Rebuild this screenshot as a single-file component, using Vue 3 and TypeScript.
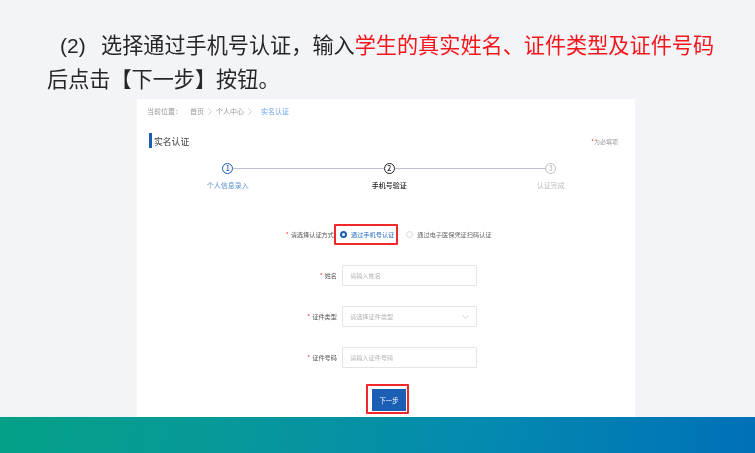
<script setup lang="ts">
interface Step { no: number; label: string; state: string }
const steps: Step[] = [
  { no: 1, label: '个人信息录入', state: 'done' },
  { no: 2, label: '手机号验证', state: 'active' },
  { no: 3, label: '认证完成', state: 'todo' },
]
</script>

<template>
  <div class="slide">
    <div class="instruction">
      <p class="line first"><span class="num">(2)</span>选择通过手机号认证，输入<span class="red">学生的真实姓名、证件类型及证件号码</span></p>
      <p class="line">后点击【下一步】按钮。</p>
    </div>
    <div class="card">
      <div class="crumbs">
        <span class="crumb-lead">当前位置：</span>
        <span>首页</span>
        <svg class="sep" width="4" height="7" viewBox="0 0 4 7"><path d="M.5.5 3.5 3.5.5 6.5" fill="none" stroke="#b5b5b5" stroke-width=".7"/></svg>
        <span>个人中心</span>
        <svg class="sep" width="4" height="7" viewBox="0 0 4 7"><path d="M.5.5 3.5 3.5.5 6.5" fill="none" stroke="#b5b5b5" stroke-width=".7"/></svg>
        <span class="here">实名认证</span>
      </div>
      <div class="title-row">
        <h1 class="title">实名认证</h1>
        <span class="required"><i>*</i>为必填项</span>
      </div>
      <div class="steps">
        <div v-for="s in steps" :key="s.no" class="step" :class="s.state">
          <span class="dot">{{ s.no }}</span>
          <span class="step-label">{{ s.label }}</span>
        </div>
      </div>
      <div class="form">
        <div class="row radio-row">
          <label class="label"><i>*</i>请选择认证方式</label>
          <div class="radios">
            <span class="radio on"><b class="circle"></b>通过手机号认证</span>
            <span class="radio"><b class="circle"></b>通过电子医保凭证扫码认证</span>
          </div>
        </div>
        <div class="row">
          <label class="label"><i>*</i>姓名</label>
          <div class="control">请输入姓名</div>
        </div>
        <div class="row">
          <label class="label"><i>*</i>证件类型</label>
          <div class="control">
            请选择证件类型
            <svg width="7" height="4" viewBox="0 0 7 4"><path d="M.5.5 3.5 3.3 6.5.5" fill="none" stroke="#b4b8bf" stroke-width=".7"/></svg>
          </div>
        </div>
        <div class="row">
          <label class="label"><i>*</i>证件号码</label>
          <div class="control">请输入证件号码</div>
        </div>
        <div class="actions">
          <div class="next-box"><button class="next" type="button">下一步</button></div>
        </div>
      </div>
    </div>
    <div class="band"></div>
  </div>
</template>

<style>
html, body { margin: 0; padding: 0; background: #f3f4f7; }
</style>

<style scoped>
.slide {
  width: 755px;
  height: 453px;
  overflow: hidden;
  background: #f3f4f7;
  display: flex;
  flex-direction: column;
  font-family: "Noto Sans CJK SC", "Liberation Sans", sans-serif;
}
.instruction {
  height: 99px;
  box-sizing: border-box;
  padding: 28px 0 0 47px;
  color: #262626;
  font-size: 21.15px;
  line-height: 32px;
  filter: blur(0.4px);
}
.line { margin: 0; white-space: nowrap; }
.line.first { margin-left: 13px; }
.num {
  display: inline-block;
  width: 41px;
  font-family: "Liberation Sans", sans-serif;
  font-size: 21px;
}
.red { color: #f5161c; }
.card {
  width: 498px;
  height: 318px;
  margin-left: 137px;
  box-sizing: border-box;
  background: #fff;
  padding: 0 17px 0 10px;
  color: #555;
  font-size: 6.2px;
  filter: blur(0.5px);
}
.crumbs {
  height: 24px;
  display: flex;
  align-items: center;
  color: #999;
  font-size: 7px;
}
.crumb-lead { width: 43px; }
.sep { margin: 0 4px; }
.here { margin-left: 5px; color: #6aa6ec; }
.title-row {
  height: 20px;
  margin-top: 8px;
  display: flex;
  align-items: center;
  justify-content: space-between;
  padding-left: 3px;
  position: relative;
}
.title-row::before {
  content: "";
  position: absolute;
  left: 2px;
  top: 2px;
  width: 3px;
  height: 15px;
  background: #1a5fb4;
}
.title {
  margin: 0 0 0 4px;
  font-size: 8.8px;
  font-weight: 400;
  color: #3c3c3c;
}
.required { color: #999; font-size: 6px; }
.required i { color: #f0383c; font-style: normal; }
.steps {
  display: grid;
  grid-template-columns: repeat(3, 161.5px);
  margin-top: 12px;
}
.step {
  position: relative;
  display: flex;
  flex-direction: column;
  align-items: center;
  gap: 6px;
  font-size: 7px;
}
.step:not(:last-child)::after {
  content: "";
  position: absolute;
  top: 5px;
  left: calc(50% + 5.5px);
  width: 151px;
  height: 1px;
  background: #bcc0cd;
}
.dot {
  width: 11px;
  height: 11px;
  box-sizing: border-box;
  border: 1px solid currentColor;
  border-radius: 50%;
  display: flex;
  align-items: center;
  justify-content: center;
  font-size: 7px;
  font-weight: 500;
  line-height: 1;
}
.step.done { color: #1a5fb4; }
.step.done .step-label { color: #5f93d2; }
.step.active { color: #222; }
.step.active .dot { border-width: 1.3px; }
.step.active .step-label { font-weight: 500; }
.step.todo { color: #bdbdbd; }
.form {
  margin-top: 34px;
  display: flex;
  flex-direction: column;
  gap: 20px;
}
.row {
  display: flex;
  align-items: center;
  height: 21px;
  gap: 5px;
}
.radio-row { height: 20px; margin-bottom: 1px; }
.radio-row .label { width: 187px; }
.label {
  width: 190px;
  text-align: right;
  color: #555;
  white-space: nowrap;
}
.label i { color: #f0383c; font-style: normal; margin-right: 2px; }
.control {
  width: 135px;
  height: 21px;
  box-sizing: border-box;
  border: 1px solid #e2e4e8;
  border-radius: 1px;
  background: #fff;
  display: flex;
  align-items: center;
  justify-content: space-between;
  padding: 0 7px;
  color: #b4b4b4;
}
.radios {
  position: relative;
  display: flex;
  align-items: center;
  gap: 12px;
  margin-left: -5px;
}
.radio {
  display: flex;
  align-items: center;
  gap: 4px;
  white-space: nowrap;
  color: #666;
}
.radio.on { color: #2a6fc4; position: relative; padding-left: 6px; }
.radio.on::after {
  content: "";
  position: absolute;
  left: 0;
  top: -6px;
  right: -4px;
  bottom: -6px;
  border: 2px solid #f0282c;
  box-sizing: border-box;
  border-radius: 1px;
}
.circle {
  width: 7px;
  height: 7px;
  box-sizing: border-box;
  border: 1px solid #d5d7da;
  border-radius: 50%;
  background: #fff;
}
.radio.on .circle { border: 2px solid #1a5fb4; background: #fff; }
.actions { display: flex; justify-content: center; margin-top: -4px; width: 481px; }
.next-box {
  padding: 3px 1px 1px 4px;
  border: 2px solid #f0282c;
  border-radius: 1px;
}
.next {
  display: block;
  width: 34px;
  height: 22px;
  border: 0;
  padding: 0;
  background: #1a5fb4;
  color: #fff;
  font: inherit;
  font-size: 6.3px;
}
.band {
  height: 36px;
  flex: none;
  background: linear-gradient(100deg, #05a086 0%, #07999a 30%, #0489b0 65%, #0070b8 100%);
}
</style>
